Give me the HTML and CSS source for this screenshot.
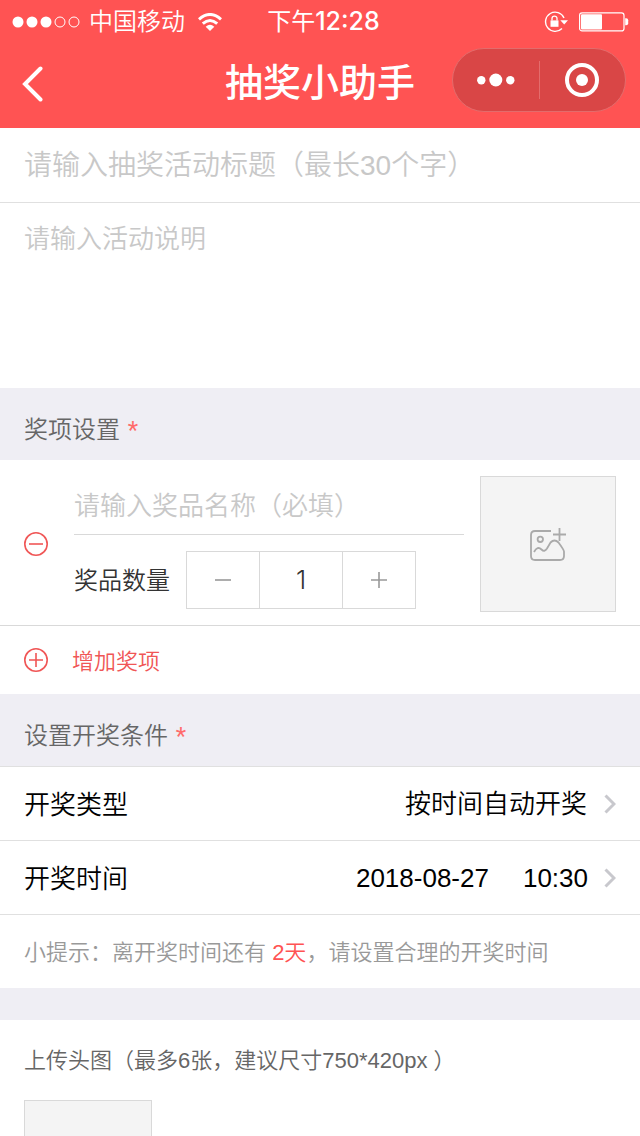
FILE: index.html
```html
<!DOCTYPE html>
<html lang="zh-CN">
<head>
    <meta charset="UTF-8">
    <meta name="viewport" content="width=device-width, initial-scale=1.0">
    <title>抽奖小助手</title>
    <link rel="stylesheet" href="styles.css">
</head>
<body>
    <header class="header">
        <div class="status-bar">
            <div class="status-left">
                <svg class="signal" width="68" height="12" viewBox="0 0 68 12">
                    <g fill="#fff">
                        <circle cx="6" cy="6" r="5.5"/>
                        <circle cx="20" cy="6" r="5.5"/>
                        <circle cx="34" cy="6" r="5.5"/>
                    </g>
                    <g fill="none" stroke="#fff">
                        <circle cx="48" cy="6" r="5"/>
                        <circle cx="62" cy="6" r="5"/>
                    </g>
                </svg>
                <span>中国移动</span>
                <svg class="wifi" width="24" height="18" viewBox="0 0 24 18">
                    <g fill="none" stroke="#fff" stroke-width="3">
                        <path d="M1 6.3 Q12 -3.3 23 6.3"/>
                        <path d="M4.8 10.7 Q12 4.3 19.2 10.7"/>
                    </g>
                    <path d="M7.7 13.7 Q12 9.6 16.3 13.7 L12 18 Z" fill="#fff"/>
                </svg>
            </div>
            <div class="time">下午<b>12:28</b></div>
            <div class="status-right">
                <svg width="24" height="22" viewBox="0 0 24 22">
                    <path d="M20 7 A9.6 9.6 0 1 0 18 17.5" fill="none" stroke="#fff" stroke-width="1.4"/>
                    <path d="M16.3 9.3 H24 L20.2 13.6 Z" fill="#fff"/>
                    <rect x="6.5" y="9.4" width="8" height="6.4" fill="#fff"/>
                    <path d="M8 9.5 V7.6 a2.5 2.5 0 0 1 5 0 V9.5" fill="none" stroke="#fff" stroke-width="1.3"/>
                </svg>
                <svg width="50" height="20" viewBox="0 0 50 20">
                    <rect x="0.6" y="0.9" width="44.4" height="18" rx="2.5" fill="none" stroke="#fff" stroke-width="1.2"/>
                    <rect x="2" y="2.3" width="21" height="15.2" rx="1" fill="#fff"/>
                    <path d="M46.2 6.3 h1 q2 0 2 2 v3 q0 2 -2 2 h-1 Z" fill="#fff"/>
                </svg>
            </div>
        </div>
        <div class="nav-bar">
            <button type="button" class="back" aria-label="返回">
                <svg width="22" height="36" viewBox="0 0 22 36">
                    <path d="M18.5 2.5 L3 18 L18.5 33.5" fill="none" stroke="#fff" stroke-width="4" stroke-linecap="round"/>
                </svg>
            </button>
            <h1>抽奖小助手</h1>
            <div class="capsule">
                <button type="button" aria-label="更多">
                    <svg width="38" height="14" viewBox="0 0 38 14" fill="#fff">
                        <circle cx="4.3" cy="7.3" r="4.2"/>
                        <circle cx="18.8" cy="7" r="6.5"/>
                        <circle cx="33.3" cy="7.3" r="4.2"/>
                    </svg>
                </button>
                <button type="button" aria-label="关闭">
                    <svg width="34" height="34" viewBox="0 0 34 34">
                        <circle cx="17" cy="17" r="15" fill="none" stroke="#fff" stroke-width="4"/>
                        <circle cx="17" cy="17" r="6" fill="#fff"/>
                    </svg>
                </button>
            </div>
        </div>
    </header>

    <form class="content">
        <input type="text" class="title-input" aria-label="活动标题" placeholder="请输入抽奖活动标题（最长30个字）">
        <textarea class="desc-input" aria-label="活动说明" placeholder="请输入活动说明"></textarea>

        <h2 class="section-title">奖项设置 <span class="required">*</span></h2>
        <div class="prize">
            <button type="button" class="remove" aria-label="删除奖项">
                <svg width="24" height="24" viewBox="0 0 24 24" fill="none" stroke="#f05656" stroke-width="1.6">
                    <circle cx="12" cy="12" r="11.2"/>
                    <path d="M5 12 H19"/>
                </svg>
            </button>
            <div class="prize-info">
                <input type="text" class="prize-name" aria-label="奖品名称" placeholder="请输入奖品名称（必填）">
                <div class="amount">
                    <label for="amount">奖品数量</label>
                    <div class="stepper">
                        <button type="button" aria-label="减少">
                            <svg width="18" height="18" viewBox="0 0 18 18" stroke="#999" stroke-width="1.6">
                                <path d="M1 9 H17"/>
                            </svg>
                        </button>
                        <input type="text" id="amount" value="1">
                        <button type="button" aria-label="增加">
                            <svg width="18" height="18" viewBox="0 0 18 18" stroke="#999" stroke-width="1.6">
                                <path d="M1 9 H17 M9 1 V17"/>
                            </svg>
                        </button>
                    </div>
                </div>
            </div>
            <button type="button" class="prize-image" aria-label="上传奖品图片">
                <svg width="36" height="34" viewBox="0 0 36 34" fill="none" stroke="#aaa" stroke-width="1.8">
                    <path d="M21 4 H5 Q1 4 1 8 V29 Q1 33 5 33 H30 Q34 33 34 29 V24.5 Q34 23 28.5 15.5 Q24.5 11.5 20.5 15.5 L17 21.5 Q14.5 25.5 11.5 22.5 Q7.5 18.5 4 25"/>
                    <circle cx="10.3" cy="12.3" r="2.7"/>
                    <path d="M23 7.5 H36 M29.5 1 V14"/>
                </svg>
            </button>
        </div>
        <button type="button" class="add-prize">
            <svg width="24" height="24" viewBox="0 0 24 24" fill="none" stroke="#f05656" stroke-width="1.6">
                <circle cx="12" cy="12" r="11.2"/>
                <path d="M5 12 H19 M12 5 V19"/>
            </svg>
            <span>增加奖项</span>
        </button>

        <h2 class="section-title bordered">设置开奖条件 <span class="required">*</span></h2>
        <div class="row">
            <label for="type">开奖类型</label>
            <select id="type">
                <option>按时间自动开奖</option>
            </select>
            <svg class="arrow" width="12" height="20" viewBox="0 0 12 20">
                <path d="M1.5 1.5 L10 10 L1.5 18.5" fill="none" stroke="#c8c8cd" stroke-width="3"/>
            </svg>
        </div>
        <div class="row">
            <span>开奖时间</span>
            <div class="date">
                <button type="button">2018-08-27</button>
                <button type="button">10:30</button>
            </div>
            <svg class="arrow" width="12" height="20" viewBox="0 0 12 20">
                <path d="M1.5 1.5 L10 10 L1.5 18.5" fill="none" stroke="#c8c8cd" stroke-width="3"/>
            </svg>
        </div>
        <p class="tip">小提示：离开奖时间还有 <em>2天</em>，请设置合理的开奖时间</p>

        <div class="upload">
            <p>上传头图（最多6张，建议尺寸750*420px ）</p>
            <button type="button" class="upload-box" aria-label="上传头图"></button>
        </div>
    </form>
</body>
</html>
```

FILE: styles.css
```css
* {
    box-sizing: border-box;
}
body {
    margin: 0;
    height: 100vh;
    display: flex;
    flex-direction: column;
    background-color: #fff;
    color: #000;
    font-family: "Liberation Sans", "Noto Sans CJK SC", sans-serif;
    font-size: 26px;
    font-weight: 350;
}
h1, h2, p {
    margin: 0;
    font-weight: inherit;
}
button, input, textarea, select {
    margin: 0;
    padding: 0;
    border: none;
    border-radius: 0;
    outline: none;
    background: none;
    color: inherit;
    font: inherit;
}
button {
    cursor: pointer;
}
svg {
    display: block;
    flex: none;
}
::placeholder {
    color: #c8c8c8;
    opacity: 1;
}

/* 顶部 */
.header {
    flex: none;
    background-color: #ff5353;
    color: #fff;
}
.status-bar {
    display: grid;
    grid-template-columns: 1fr auto 1fr;
    align-items: center;
    height: 40px;
    padding: 1px 11px 0 12px;
    font-size: 24px;
    line-height: 40px;
}
.status-left, .status-right {
    display: flex;
    align-items: center;
}
.status-left {
    gap: 9px;
}
.wifi {
    margin-left: 4px;
}
.status-right {
    justify-content: flex-end;
    gap: 11px;
}
.time {
    padding-left: 6px;
    font-family: Inter, "Noto Sans CJK SC", sans-serif;
    font-weight: 400;
}
.time b {
    font-size: 25px;
    font-weight: 500;
}
.nav-bar {
    display: grid;
    grid-template-columns: 1fr auto 1fr;
    align-items: center;
    height: 88px;
    padding: 0 14px 8px 22px;
}
.back {
    justify-self: start;
    padding-top: 8px;
}
.nav-bar h1 {
    padding: 6px 8px 0 0;
    font-size: 38px;
    font-weight: 500;
    line-height: 74px;
}
.capsule {
    justify-self: end;
    display: flex;
    align-items: center;
    width: 174px;
    height: 64px;
    border: 1px solid #e36c6c;
    border-radius: 32px;
    background-color: #d94646;
}
.capsule button {
    flex: 1;
    display: flex;
    align-items: center;
    justify-content: center;
    height: 38px;
}
.capsule button + button {
    border-left: 1px solid #e36c6c;
}

/* 表单 */
.content {
    flex: 1;
    min-height: 0;
    overflow-y: auto;
    scrollbar-width: none;
}
.title-input {
    display: block;
    width: 100%;
    height: 75px;
    padding: 2px 24px 0;
    border-bottom: 1px solid #e0e0e0;
    font-size: 28px;
}
.desc-input {
    display: block;
    width: 100%;
    height: 185px;
    padding: 18px 24px;
    line-height: 36px;
    resize: none;
}
.section-title {
    height: 72px;
    padding: 12px 24px 0;
    background-color: #efeef4;
    color: #666;
    font-size: 24px;
    line-height: 60px;
}
.section-title.bordered {
    height: 73px;
    border-bottom: 1px solid #e0e0e0;
}
.required {
    margin-left: 1px;
    color: #ff6b6b;
    font-family: Roboto, sans-serif;
    font-weight: 400;
}
.prize {
    display: flex;
    padding: 16px 24px 13px;
    border-bottom: 1px solid #d9d9d9;
}
.remove {
    margin-right: 26px;
}
.prize-info {
    flex: 1;
    min-width: 0;
}
.prize-name {
    display: block;
    width: 100%;
    height: 59px;
    padding-top: 2px;
    border-bottom: 1px solid #d9d9d9;
}
.amount {
    display: flex;
    align-items: center;
    margin-top: 16px;
    color: #333;
    font-size: 24px;
}
.amount label {
    padding-bottom: 4px;
}
.stepper {
    display: flex;
    height: 58px;
    margin-left: 16px;
    border: 1px solid #d9d9d9;
}
.stepper button {
    display: flex;
    align-items: center;
    justify-content: center;
    width: 72px;
}
.stepper input {
    width: 84px;
    padding-bottom: 2px;
    border: 1px solid #d9d9d9;
    border-width: 0 1px;
    font-family: Inter, sans-serif;
    font-size: 26px;
    text-align: center;
}
.prize-image {
    display: flex;
    align-items: center;
    justify-content: center;
    width: 136px;
    height: 136px;
    margin-left: 16px;
    border: 1px solid #d9d9d9;
    background-color: #f4f4f4;
}
.add-prize {
    display: flex;
    align-items: center;
    gap: 24px;
    width: 100%;
    height: 68px;
    padding: 0 24px;
    color: #f05656;
    font-size: 22px;
}
.add-prize span {
    padding-bottom: 2px;
}
.row {
    display: flex;
    align-items: center;
    height: 74px;
    padding: 0 24px;
    border-bottom: 1px solid #e0e0e0;
}
.row > label, .row > span {
    padding-bottom: 2px;
}
.row select {
    margin-left: auto;
    appearance: none;
}
.date {
    display: flex;
    gap: 34px;
    margin-left: auto;
    padding-top: 2px;
}
.arrow {
    margin-left: 16px;
}
.tip {
    height: 73px;
    padding: 0 24px;
    color: #999;
    font-size: 22px;
    line-height: 76px;
}
.tip em {
    color: #ff5353;
    font-style: normal;
}
.upload {
    padding: 0 24px 24px;
    border-top: 32px solid #efeef4;
    color: #666;
    font-size: 22px;
}
.upload p {
    height: 80px;
    line-height: 82px;
}
.upload-box {
    display: block;
    width: 128px;
    height: 128px;
    border: 1px solid #d9d9d9;
    background-color: #f4f4f4;
}
```
